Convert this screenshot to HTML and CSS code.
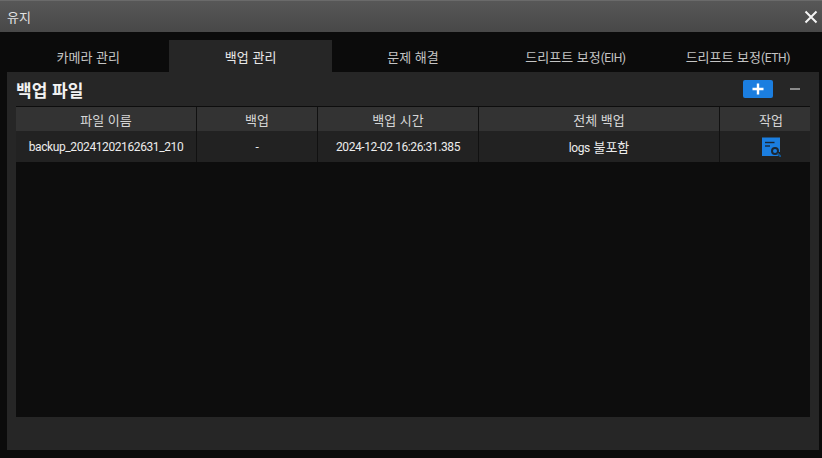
FILE: index.html
```html
<!DOCTYPE html>
<html lang="ko">
<head>
  <meta charset="UTF-8">
  <meta name="viewport" content="width=device-width, initial-scale=1.0">
  <title>유지</title>
  <link rel="stylesheet" href="styles.css">
</head>
<body>
  <div class="titlebar">
    <span class="title">유지</span>
    <button class="close" aria-label="닫기">
      <svg width="14" height="14" viewBox="0 0 14 14"><path d="M1.5 1.5 12.5 12.5M12.5 1.5 1.5 12.5" stroke="#f4f4f4" stroke-width="2" fill="none"/></svg>
    </button>
  </div>

  <div class="content">
    <div class="tabs">
      <div class="tab">카메라 관리</div>
      <div class="tab active">백업 관리</div>
      <div class="tab">문제 해결</div>
      <div class="tab"><span>드리프트 보정<span class="lat">(EIH)</span></span></div>
      <div class="tab"><span>드리프트 보정<span class="lat">(ETH)</span></span></div>
    </div>

    <section class="panel">
      <div class="panel-head">
        <h2>백업 파일</h2>
        <button class="add" aria-label="추가">
          <svg width="12" height="12" viewBox="0 0 12 12"><path d="M6 0.5V11.5M0.5 6H11.5" stroke="#fff" stroke-width="2.4" fill="none"/></svg>
        </button>
        <button class="minimize" aria-label="접기"></button>
      </div>

      <div class="table">
        <div class="row head">
          <div class="cell c1">파일 이름</div>
          <div class="cell c2">백업</div>
          <div class="cell c3">백업 시간</div>
          <div class="cell c4">전체 백업</div>
          <div class="cell c5">작업</div>
        </div>
        <div class="row body">
          <div class="cell c1"><span class="lat">backup_20241202162631_210</span></div>
          <div class="cell c2"><span class="lat">-</span></div>
          <div class="cell c3"><span class="lat">2024-12-02 16:26:31.385</span></div>
          <div class="cell c4"><span><span class="lat">logs</span> 불포함</span></div>
          <div class="cell c5">
            <svg width="20" height="20" viewBox="0 0 20 20">
              <path d="M1 0.5H19V15H17V19H1Z" fill="#1b7ee0"/>
              <path d="M4 5.5H13.5" stroke="#1c2733" stroke-width="1.4"/>
              <path d="M4 9H9" stroke="#1c2733" stroke-width="1.4"/>
              <circle cx="14" cy="14" r="3" fill="#1b7ee0" stroke="#1c2733" stroke-width="2"/>
              <path d="M16.5 16.5 20 20" stroke="#14568f" stroke-width="2"/>
            </svg>
          </div>
        </div>
      </div>
    </section>
  </div>
</body>
</html>
```

FILE: styles.css
```css
html, body {
  height: 100%;
}
body {
  margin: 0;
  background-color: #0b0b0b;
  color: #e6e6e6;
  font-family: "Noto Sans CJK KR", "Noto Sans", sans-serif;
  font-size: 13px;
  overflow: hidden;
}
button {
  border: none;
  padding: 0;
  background: none;
}

/* latin text is narrower than the hangul next to it */
.lat {
  font-family: Roboto, "Noto Sans", sans-serif;
  font-size: 12px;
  letter-spacing: -0.4px;
}

.titlebar {
  display: flex;
  align-items: center;
  justify-content: space-between;
  height: 32px;
  padding: 0 4px 0 7px;
  background: linear-gradient(#575757, #484848);
  border-top: 1px solid #6a6a6a;
  box-sizing: border-box;
}
.title {
  color: #e2e2e2;
}
.close {
  display: flex;
}

.content {
  padding: 8px 3px 8px 7px;
}

.tabs {
  display: flex;
  height: 32px;
}
.tab {
  flex: 1;
  display: flex;
  align-items: center;
  justify-content: center;
  color: #c4c4c4;
}
.tab.active {
  background-color: #262626;
  color: #e8e8e8;
}

.panel {
  height: 378px;
  padding: 0 9px 33px 9px;
  background-color: #262626;
  box-sizing: border-box;
  display: flex;
  flex-direction: column;
}
.panel-head {
  display: flex;
  align-items: center;
  height: 34px;
  flex-shrink: 0;
}
.panel-head h2 {
  flex: 1;
  margin: 0;
  font-size: 17px;
  font-weight: 700;
  color: #f2f2f2;
}
.add {
  display: flex;
  align-items: center;
  justify-content: center;
  width: 30px;
  height: 18px;
  border-radius: 2px;
  background-color: #1b7ee0;
}
.minimize {
  width: 10px;
  height: 2px;
  margin: 0 10px 0 17px;
  background-color: #8a8a8a;
}

.table {
  flex: 1;
  background-color: #0d0d0d;
  border-top: 1px solid #0d0d0d;
}
.row {
  display: flex;
}
.row.head {
  height: 24px;
  background-color: #333;
  color: #d6d6d6;
}
.row.body {
  height: 32px;
  background-color: #222;
  color: #ececec;
  border-bottom: 1px solid #0d0d0d;
  box-sizing: border-box;
}
.cell {
  display: flex;
  align-items: center;
  justify-content: center;
  border-right: 1px solid #111;
  box-sizing: border-box;
}
.c1 { width: 181px; }
.c2 { width: 121px; }
.c3 { width: 161px; }
.c4 { width: 241px; }
.c5 { width: 90px; padding-left: 12px; border-right: none; }
```
